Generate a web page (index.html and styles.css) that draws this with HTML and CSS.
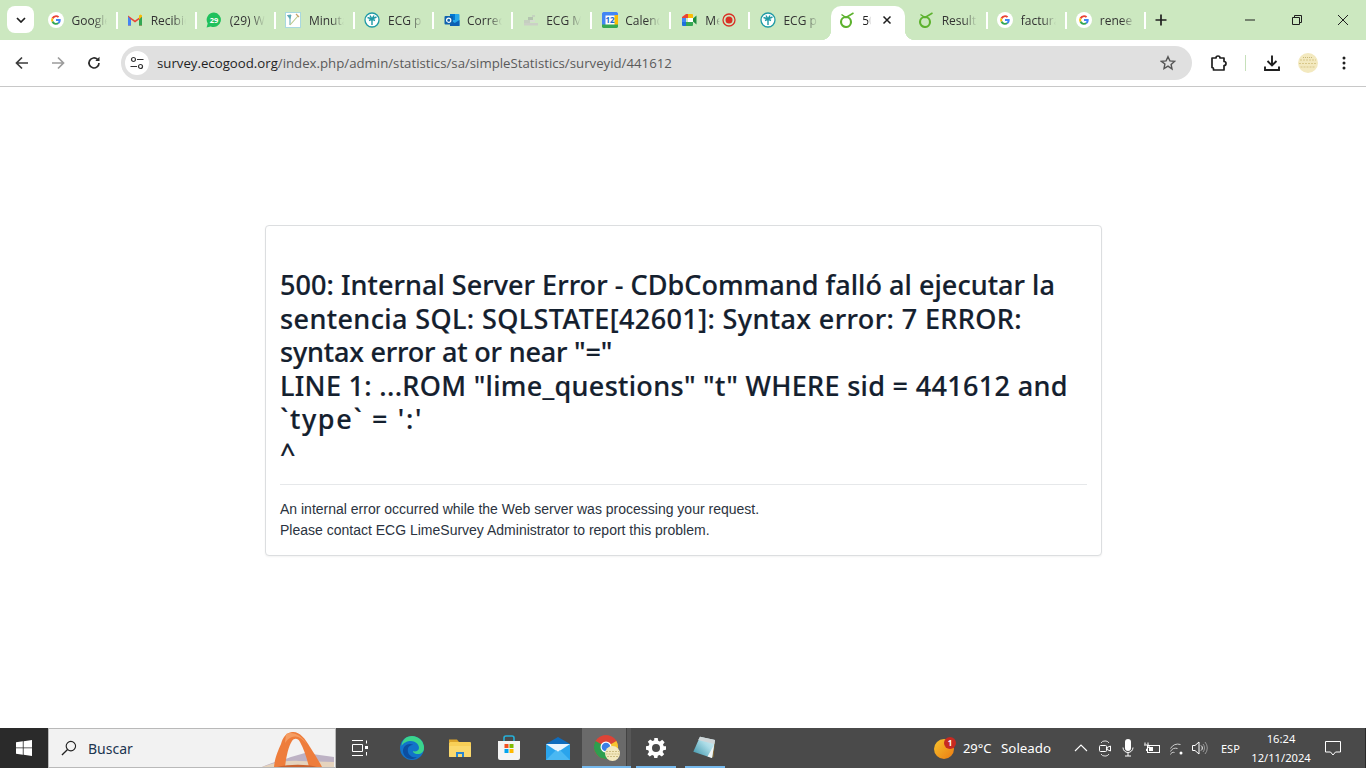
FILE: index.html
```html
<!DOCTYPE html>
<html lang="es">
<head>
<meta charset="utf-8">
<title>500: Internal Server Error</title>
<link rel="stylesheet" href="styles.css">
</head>
<body>
<svg class="defs" width="0" height="0" aria-hidden="true">
  <symbol id="g" viewBox="0 0 16 16">
    <circle cx="8" cy="8" r="8" fill="#fff"/>
    <path d="M8 3.200a4.800 4.800 0 0 1 3.200 1.200L9.900 5.700A2.900 2.900 0 0 0 5.300 7L3.700 5.800A4.800 4.800 0 0 1 8 3.200z" fill="#ea4335"/>
    <path d="M3.700 5.800 5.300 7a3 3 0 0 0 0 2L3.700 10.200a4.800 4.800 0 0 1 0-4.400z" fill="#fbbc05"/>
    <path d="M3.700 10.200 5.300 9a2.900 2.900 0 0 0 4.300 1.500l1.500 1.200A4.800 4.800 0 0 1 3.700 10.200z" fill="#34a853"/>
    <path d="M12.700 8c0-.3 0-.6-.1-.9H8v1.900h2.600a2.300 2.300 0 0 1-1 1.500l1.500 1.200c.9-.8 1.600-2.100 1.600-3.700z" fill="#4285f4"/>
  </symbol>
  <symbol id="palm" viewBox="0 0 16 16">
    <circle cx="8" cy="8" r="7" fill="#fff" stroke="#1f9aa5" stroke-width="1.300"/>
    <path d="M8 13V7M3.500 5.500 8 7l4.500-2M5 8.500 8 7l3 1.500M6 3.500 8 7l2-3.500" fill="none" stroke="#1f9aa5" stroke-width="1.400"/>
  </symbol>
  <symbol id="lime" viewBox="0 0 16 16">
    <circle cx="7" cy="10" r="5" fill="none" stroke="#5db22e" stroke-width="2.100"/>
    <path d="M2.500 2.500 7 5.500 14.500 1" fill="none" stroke="#5db22e" stroke-width="1.500"/>
  </symbol>
</svg>

<header class="tabstrip">
  <button class="tab-menu" aria-label="Buscar pestañas">
    <svg width="10" height="6" viewBox="0 0 10 6"><path d="M1 1l4 4 4-4" fill="none" stroke="#1f1f1f" stroke-width="1.700"/></svg>
  </button>
  <div class="tabs">
    <div class="tab"><svg class="fav"><use href="#g"/></svg><span class="tab-title">Google</span></div>
    <div class="tab"><svg class="fav" viewBox="0 0 16 16"><path d="M1 13.500V3.500l7 5 7-5v10h-3V7.500L8 10.500 4 7.500v6z" fill="#ea4335"/><path d="M1 13.500h3V7.500L1 4.500z" fill="#4285f4"/><path d="M12 13.500h3v-9l-3 3z" fill="#34a853"/><path d="M12 7.500l3-3v-1l-1.500-1L12 3.500z" fill="#fbbc05"/></svg><span class="tab-title">Recibidos</span></div>
    <div class="tab"><svg class="fav" viewBox="0 0 16 16"><path d="M8 .5a7.300 7.300 0 0 0-6.300 11L.6 15.500l4.100-1A7.300 7.300 0 1 0 8 .5z" fill="#1fc15c"/><text x="8" y="10.800" class="wa-num">29</text></svg><span class="tab-title">(29) WhatsApp</span></div>
    <div class="tab"><svg class="fav" viewBox="0 0 16 16"><rect x=".5" y=".5" width="15" height="15" fill="#fff" stroke="#a9d8e0"/><path d="M2.500 3.500 6 3 5 6.500zM5 5.500V13" fill="#5aa7b5" stroke="#5aa7b5"/><path d="M13 4 5 13" fill="none" stroke="#b9c98a" stroke-width="1.100"/><path d="M11 2l3 3" stroke="#c9a06a" stroke-width="1.200"/></svg><span class="tab-title">Minutas</span></div>
    <div class="tab"><svg class="fav"><use href="#palm"/></svg><span class="tab-title">ECG p</span></div>
    <div class="tab"><svg class="fav" viewBox="0 0 16 16"><rect x="6" y="2" width="9.500" height="12" rx="1" fill="#28a8ea"/><rect x="6" y="2" width="5" height="6" fill="#0078d4"/><path d="M6 8l4.800 3L15.500 8v6H6z" fill="#0a5fb4"/><rect x=".5" y="4" width="8.500" height="8.500" rx="1" fill="#0f62ae"/><circle cx="4.700" cy="8.200" r="2.100" fill="none" stroke="#fff" stroke-width="1.200"/></svg><span class="tab-title">Correo</span></div>
    <div class="tab"><svg class="fav" viewBox="0 0 16 16"><rect x="1" y="8" width="6" height="3" fill="#c5cfc0"/><rect x="5" y="5" width="5" height="3" fill="#b4c4b0"/><rect x="9" y="3" width="3" height="2" fill="#c5d3c0"/><rect x="1" y="11" width="14" height="2.500" fill="#cbd0c6"/><rect x="7" y="8" width="5" height="2" fill="#d5dcd0"/></svg><span class="tab-title">ECG Minutes</span></div>
    <div class="tab"><svg class="fav" viewBox="0 0 16 16"><rect x="0" y="0" width="16" height="16" rx="1.500" fill="#fff"/><path d="M0 1.500A1.500 1.500 0 0 1 1.500 0h13A1.500 1.500 0 0 1 16 1.500V3.500H0z" fill="#4285f4"/><rect y="3" width="3.500" height="10" fill="#4285f4"/><rect x="12.500" y="3" width="3.500" height="10" fill="#fbbc05"/><path d="M0 12.500h16v2A1.500 1.500 0 0 1 14.500 16h-13A1.500 1.500 0 0 1 0 14.500z" fill="#34a853"/><text x="8" y="11" class="cal-num">12</text></svg><span class="tab-title">Calendar</span></div>
    <div class="tab tab-rec"><svg class="fav" viewBox="0 0 16 16"><path d="M5 2h6v4H1V5z" fill="#ea4335"/><path d="M11 2a1 1 0 0 1 1 1v3H7V2z" fill="#fbbc05"/><path d="M1 6h4v4H1z" fill="#4285f4"/><path d="M1 10h4v4H2a1 1 0 0 1-1-1z" fill="#1e6fdc"/><path d="M5 10h7v3a1 1 0 0 1-1 1H5z" fill="#34a853"/><path d="M12 6v4H7V6z" fill="#fff"/><path d="M12 6.500 15.500 3.500v9L12 9.500z" fill="#1e8e3e"/></svg><span class="tab-title tab-title-short">Meet</span><svg class="rec" width="14" height="14" viewBox="0 0 14 14"><circle cx="7" cy="7" r="6" fill="none" stroke="#d93025" stroke-width="1.300"/><circle cx="7" cy="7" r="3.500" fill="#d93025"/></svg></div>
    <div class="tab"><svg class="fav"><use href="#palm"/></svg><span class="tab-title">ECG p</span></div>
    <div class="tab tab-active"><svg class="fav"><use href="#lime"/></svg><span class="tab-title tab-title-tiny">500</span><svg class="tab-x" width="10" height="10" viewBox="0 0 10 10"><path d="M1.500 1.500l7 7M8.500 1.500l-7 7" stroke="#1f1f1f" stroke-width="1.500"/></svg></div>
    <div class="tab"><svg class="fav"><use href="#lime"/></svg><span class="tab-title">Resultados</span></div>
    <div class="tab"><svg class="fav"><use href="#g"/></svg><span class="tab-title">facturas</span></div>
    <div class="tab"><svg class="fav"><use href="#g"/></svg><span class="tab-title">renee</span></div>
  </div>
  <button class="new-tab" aria-label="Nueva pestaña">
    <svg width="12" height="12" viewBox="0 0 12 12"><path d="M6 .5v11M.5 6h11" stroke="#1f1f1f" stroke-width="1.700"/></svg>
  </button>
  <div class="window-controls">
    <svg width="12" height="12" viewBox="0 0 12 12"><path d="M1 6h10" stroke="#1f1f1f"/></svg>
    <svg width="12" height="12" viewBox="0 0 12 12"><path d="M1.500 3.500h7v7h-7zM3.500 3.500v-2h7v7h-2" fill="none" stroke="#1f1f1f"/></svg>
    <svg width="12" height="12" viewBox="0 0 12 12"><path d="M1 1l10 10M11 1 1 11" stroke="#1f1f1f"/></svg>
  </div>
</header>

<nav class="toolbar">
  <div class="nav-btns">
    <svg width="16" height="16" viewBox="0 0 16 16"><path d="M14 8H2.500M8 2.500 2.500 8 8 13.500" fill="none" stroke="#3b3b3b" stroke-width="1.700"/></svg>
    <svg width="16" height="16" viewBox="0 0 16 16"><path d="M2 8h11.500M8 2.500 13.500 8 8 13.500" fill="none" stroke="#9c9c9c" stroke-width="1.700"/></svg>
    <svg width="16" height="16" viewBox="0 0 16 16"><path d="M13 8a5 5 0 1 1-1.500-3.600" fill="none" stroke="#2b2b2b" stroke-width="1.700"/><path d="M13.500 1.800v4.200H9.300z" fill="#2b2b2b"/></svg>
  </div>
  <div class="omnibox">
    <span class="site-info">
      <svg width="14" height="14" viewBox="0 0 14 14"><circle cx="3.500" cy="3.500" r="2" fill="none" stroke="#333" stroke-width="1.200"/><path d="M7 3.500h6.500M.5 10.500H7" stroke="#333" stroke-width="1.200"/><circle cx="10.500" cy="10.500" r="2" fill="none" stroke="#333" stroke-width="1.200"/></svg>
    </span>
    <span class="url"><span class="host">survey.ecogood.org</span>/index.php/admin/statistics/sa/simpleStatistics/surveyid/441612</span>
    <svg class="star" width="16" height="16" viewBox="0 0 16 16"><path d="M8 1.700l1.900 4.200 4.600.5-3.400 3.100.9 4.500L8 11.200l-4 2.300.9-4.500L1.500 6.400l4.600-.5z" fill="none" stroke="#555" stroke-width="1.400"/></svg>
  </div>
  <div class="tool-btns">
    <svg class="t-ext" width="18" height="18" viewBox="0 0 18 18"><path d="M2 4h4a2 2 0 1 1 4 0h4v3.500a2 2 0 1 1 0 4V16H3.500v-1a1.500 1.500 0 0 0-1.500-1.500z" fill="none" stroke="#1f1f1f" stroke-width="1.700" stroke-linejoin="round"/></svg>
    <span class="t-sep"></span>
    <svg class="t-dl" width="16" height="18" viewBox="0 0 16 18"><path d="M8 1.500V11M3.500 7 8 11.500 12.500 7" fill="none" stroke="#1f1f1f" stroke-width="1.900"/><path d="M1 12.500v3.500h14v-3.500" fill="none" stroke="#1f1f1f" stroke-width="1.900"/></svg>
    <svg class="t-avatar" width="20" height="20" viewBox="0 0 20 20"><circle cx="10" cy="10" r="10" fill="#f3e9bf"/><path d="M2 7h16M1 10.500h18M2.500 14h15" stroke="#d8c88a" stroke-width="1.200" stroke-dasharray="2 1"/><path d="M5 4.500h10" stroke="#c9b878" stroke-dasharray="1 1"/></svg>
    <svg class="t-menu" width="4" height="14" viewBox="0 0 4 14"><circle cx="2" cy="2" r="1.500" fill="#1f1f1f"/><circle cx="2" cy="7" r="1.500" fill="#1f1f1f"/><circle cx="2" cy="12" r="1.500" fill="#1f1f1f"/></svg>
  </div>
</nav>

<main class="page">
  <section class="card">
    <h1 class="err-title"><span class="ln ln-1">500: Internal Server Error - CDbCommand falló al ejecutar la</span><span class="ln ln-2">sentencia SQL: SQLSTATE[42601]: Syntax error: 7 ERROR:</span><span class="ln ln-3">syntax error at or near "="</span><span class="ln ln-4">LINE 1: ...ROM "lime_questions" "t" WHERE sid = 441612 and</span><span class="ln ln-5">`type` = ':'</span><span class="ln ln-6">^</span></h1>
    <hr class="rule">
    <p class="err-text">An internal error occurred while the Web server was processing your request.<br>Please contact ECG LimeSurvey Administrator to report this problem.</p>
  </section>
</main>

<footer class="taskbar">
  <div class="start">
    <svg width="16" height="16" viewBox="0 0 16 16"><path d="M0 2.300 6.800 1.300V7.500H0zM7.600 1.200 16 0v7.500H7.600zM0 8.300h6.800v6.400L0 13.700zM7.600 8.300H16V16l-8.400-1.200z" fill="#fff"/></svg>
  </div>
  <div class="search">
    <svg width="16" height="16" viewBox="0 0 17 17"><circle cx="10.500" cy="6.500" r="5" fill="none" stroke="#222" stroke-width="1.200"/><path d="M7 10 1 16" stroke="#222" stroke-width="1.400"/></svg>
    <span class="search-label">Buscar</span>
    <svg class="arch" width="80" height="38" viewBox="0 0 80 38"><path d="M7 38C20 32 32 30 36 28L50 24 79 28V38z" fill="#bdb2c4"/><path d="M7 38C20 33 34 31 44 32L79 33V38z" fill="#e5d3bd"/><path d="M19 38C20 28 23 22 26 15 28 8 31 4 37 3 44 2 50 9 55 18 60 26 64 32 67 38H54C52 30 49 20 45 13 43 9 39 9 37 12 33 18 31 30 30 38z" fill="#ee7d3c"/><path d="M31 5C38 2 46 6 52 15 47 9 42 6 37 8 34 9 32 11 30 14z" fill="#f59d63"/><path d="M22 38c12-3 30-3 40 0z" fill="#c9622f"/></svg>
  </div>
  <div class="apps">
    <div class="app app-task"><svg width="16" height="16" viewBox="0 0 16 16"><path d="M0 .5h11M0 15.500h11M.5 4.500h10v7H.5z" fill="none" stroke="#fff"/><path d="M14.500 .5v3M14.500 12v3.500" stroke="#fff"/><rect x="13" y="6" width="3" height="3" fill="#fff"/></svg></div>
    <div class="app app-edge"><svg width="24" height="24" viewBox="0 0 24 24"><circle cx="12" cy="12" r="12" fill="#1273c9"/><path d="M12 0a12 12 0 0 1 12 12c0 4-3 6-6 6-4 0-5-2-5-3 2 1 6 0 6-3 0-4-4-7-8-7S3 7 1.500 10C2 4 6 0 12 0z" fill="#3bd58c"/><path d="M3 15c0-4 3-7 7-7 2 0 3 1 3 1-3 0-6 2-5 7 1 4 5 6 9 5-6 5-14 0-14-6z" fill="#0c4ea0"/></svg></div>
    <div class="app"><svg width="22" height="20" viewBox="0 0 22 20"><path d="M0 1.500h8l2 2.500H0z" fill="#dba42a"/><rect y="4" width="22" height="15" rx="1" fill="#f8cf57"/><rect x="0" y="8" width="22" height="11" rx="1" fill="#fbd96d"/><path d="M7 19v-5h8v5h-2v-3H9v3z" fill="#2a86d1"/></svg></div>
    <div class="app"><svg width="24" height="26" viewBox="0 0 24 26"><path d="M7 6V3a2 2 0 0 1 2-2h6a2 2 0 0 1 2 2v3" fill="none" stroke="#26b0d8" stroke-width="1.600"/><path d="M1 6h22v17a2 2 0 0 1-2 2H3a2 2 0 0 1-2-2z" fill="#f4f4f4"/><rect x="7.500" y="9" width="4" height="4" fill="#f25022"/><rect x="12.500" y="9" width="4" height="4" fill="#7fba00"/><rect x="7.500" y="14" width="4" height="4" fill="#00a4ef"/><rect x="12.500" y="14" width="4" height="4" fill="#ffb900"/></svg></div>
    <div class="app"><svg width="24" height="23" viewBox="0 0 24 23"><path d="M0 7 12 0l12 7v3H0z" fill="#0f6cbd"/><rect y="7" width="24" height="16" fill="#2aa4ec"/><path d="M0 7l12 8 12-8" fill="#eaf5fd"/><path d="M0 23 10 13l2 2 2-2 10 10z" fill="#4ab8f2"/></svg></div>
    <div class="app app-open app-chrome"><svg width="27" height="26" viewBox="0 0 27 26"><circle cx="12" cy="12" r="12" fill="#dc4437"/><path d="M12 12 22.400 6A12 12 0 0 1 14 23.800z" fill="#f7c630"/><path d="M12 12 14 23.800A12 12 0 0 1 1.600 6z" fill="#2e9e4f"/><circle cx="12" cy="12" r="5.500" fill="#fff"/><circle cx="12" cy="12" r="4.300" fill="#3c7fe6"/><circle cx="18.500" cy="18.500" r="7.500" fill="#f3e9bf"/><path d="M12 16.500h13M11.500 19h14M13 21.500h11" stroke="#cdbd82" stroke-dasharray="2 1"/></svg></div>
    <div class="app app-open"><svg width="20" height="20" viewBox="0 0 20 20"><path d="M8.300 0h3.400l.5 2.700 1.700.7 2.300-1.600 2.400 2.400-1.600 2.300.7 1.700L20 8.300v3.400l-2.700.5-.7 1.700 1.600 2.300-2.400 2.400-2.300-1.600-1.700.7-.5 2.700H8.300l-.5-2.700-1.700-.7-2.300 1.600-2.400-2.400 1.600-2.300-.7-1.700L0 11.700V8.300l2.700-.5.7-1.700L1.800 3.800l2.400-2.400 2.300 1.600 1.700-.7zM10 6a4 4 0 1 0 0 8 4 4 0 0 0 0-8z" fill="#fff" fill-rule="evenodd"/></svg></div>
    <div class="app app-open"><svg width="24" height="24" viewBox="0 0 24 24"><defs><linearGradient id="note" x1="0" y1="1" x2="1" y2="0"><stop offset="0" stop-color="#2f8ba3"/><stop offset=".6" stop-color="#a9dbe6"/><stop offset="1" stop-color="#dff1f4"/></linearGradient></defs><path d="M22 4 20.500 21 18 22z" fill="#8f6f35"/><path d="M7 .7 22 4 19 22 .3 15.700z" fill="url(#note)"/><path d="M7 .7 22 4 21.300 8 5.200 4z" fill="#cfd6d8"/><path d="M21 9 19 22 14.500 20.500z" fill="#f2f5f5"/></svg></div>
  </div>
  <div class="tray">
    <svg class="sun" width="24" height="24" viewBox="0 0 24 24"><defs><linearGradient id="sun" x1="0" y1="0" x2="1" y2="1"><stop offset="0" stop-color="#f7c42c"/><stop offset="1" stop-color="#ec7a12"/></linearGradient></defs><circle cx="11" cy="13" r="10" fill="url(#sun)"/><circle cx="17" cy="7" r="6" fill="#c62a22"/><text x="17" y="10" class="badge-num">1</text></svg>
    <span class="temp">29°C</span>
    <span class="cond">Soleado</span>
    <svg class="t-up" width="14" height="8" viewBox="0 0 14 8"><path d="M1 7l6-6 6 6" fill="none" stroke="#fff" stroke-width="1.100"/></svg>
    <svg class="t-cam" width="12" height="17" viewBox="0 0 12 17"><path d="M2 3a4 4 0 0 1 4-2h1a4 4 0 0 1 3 2M2 14a4 4 0 0 0 4 2h1a4 4 0 0 0 3-2" fill="none" stroke="#ddd"/><rect x=".5" y="5.500" width="7" height="6" rx="1" fill="none" stroke="#fff"/><path d="M8 7.500 11.500 6v5L8 9.500z" fill="none" stroke="#fff"/></svg>
    <svg class="t-mic" width="12" height="18" viewBox="0 0 12 18"><rect x="3" y="0" width="6" height="12" rx="3" fill="#fff"/><path d="M1 8.500a5 5 0 0 0 10 0M6 13.500V17M3 17h6" fill="none" stroke="#fff"/></svg>
    <svg class="t-bat" width="16" height="12" viewBox="0 0 16 12"><rect x="3.500" y="3.500" width="12" height="7" fill="none" stroke="#fff"/><rect x="5" y="5" width="4" height="4" fill="#fff"/><path d="M1 .5v2M4 .5v2M0 3h5v2L2.500 7v2" fill="none" stroke="#fff"/></svg>
    <svg class="t-wifi" width="14" height="13" viewBox="0 0 14 13"><path d="M.5 6.500a9 9 0 0 1 10-4M.5 9.500a6 6 0 0 1 7-3M.5 12.500a3 3 0 0 1 4-2" fill="none" stroke="#ccc"/><circle cx="11" cy="11" r="1.500" fill="#fff"/></svg>
    <svg class="t-vol" width="16" height="14" viewBox="0 0 16 14"><path d="M.5 4.500h2.500L7 1v12L3 9.500H.5z" fill="none" stroke="#fff"/><path d="M9 4.500a3 3 0 0 1 0 5" fill="none" stroke="#fff"/><path d="M11 3a6 6 0 0 1 0 8M13 1a9 9 0 0 1 0 12" fill="none" stroke="#999"/></svg>
    <span class="lang">ESP</span>
    <span class="clock"><span>16:24</span><span>12/11/2024</span></span>
    <svg class="t-note" width="16" height="15" viewBox="0 0 16 15"><path d="M.5.500h15v10.500h-5l-2.500 3-2.500-3h-5z" fill="none" stroke="#fff"/></svg>
  </div>
</footer>
</body>
</html>
```
FILE: styles.css
```css
* { box-sizing: border-box; }
html, body { margin: 0; padding: 0; }
body {
  width: 1366px;
  height: 768px;
  overflow: hidden;
  display: flex;
  flex-direction: column;
  background: #fff;
  font-family: "Open Sans", "Noto Sans", sans-serif;
}
.defs { position: absolute; }
button { border: 0; padding: 0; background: none; }

/* tab strip */
.tabstrip {
  height: 40px;
  flex: none;
  display: flex;
  align-items: flex-start;
  background: #cce8c0;
}
.tab-menu {
  width: 27px;
  height: 27px;
  margin: 6px 0 0 7px;
  flex: none;
  display: flex;
  align-items: center;
  justify-content: center;
  background: #fff;
  border-radius: 8px;
}
.tabs {
  display: flex;
  margin-left: 3.600px;
  flex: none;
}
.tab {
  width: 79.100px;
  height: 34px;
  margin-top: 6px;
  padding-left: 10.500px;
  padding-bottom: 6px;
  flex: none;
  display: flex;
  align-items: center;
  position: relative;
}
.tab::after {
  content: "";
  position: absolute;
  right: -1px;
  top: 6px;
  width: 2px;
  height: 17px;
  background: #fff;
}
.tab:nth-child(10)::after { display: none; }
.fav { width: 16px; height: 16px; flex: none; }
.tab-title {
  margin-left: 7.500px;
  width: 35px;
  flex: none;
  overflow: hidden;
  white-space: nowrap;
  font-size: 12px;
  color: #333;
  -webkit-mask-image: linear-gradient(to right, #000 62%, transparent 100%);
  mask-image: linear-gradient(to right, #000 62%, transparent 100%);
}
.tab-title-short { width: 15px; }
.tab-title-tiny { width: 9px; color: #222; }
.rec { margin-left: 2px; flex: none; }
.tab-rec .fav { margin-right: 1px; }
.tab-active {
  background: #fff;
  border-radius: 10px 10px 0 0;
  width: 74px;
  margin-left: 2.600px;
  margin-right: 2.500px;
  padding-left: 8px;
}
.tab-active::before,
.tab-active::after {
  content: "";
  position: absolute;
  top: auto;
  bottom: 0;
  width: 10px;
  height: 10px;
}
.tab-active::before {
  left: -10px;
  background: radial-gradient(circle at 0 0, transparent 10px, #fff 10.500px);
}
.tab-active::after {
  right: -10px;
  background: radial-gradient(circle at 100% 0, transparent 10px, #fff 10.500px);
}
.tab-active .tab-x { margin-left: 11px; flex: none; }
.tab-active .tab-title { margin-left: 7px; }
.new-tab {
  width: 12px;
  height: 12px;
  margin: 14px 0 0 10.500px;
  flex: none;
  display: flex;
}
.window-controls {
  margin-left: auto;
  display: flex;
  gap: 34.500px;
  padding: 14px 17px 0 0;
}

/* toolbar */
.toolbar {
  height: 47px;
  flex: none;
  display: flex;
  align-items: center;
  background: #fff;
  border-bottom: 1px solid #c8c8c8;
  border-radius: 10px 10px 0 0;
}
.nav-btns {
  display: flex;
  gap: 20px;
  width: 121px;
  padding-left: 14px;
  flex: none;
}
.omnibox {
  width: 1071px;
  height: 34px;
  flex: none;
  display: flex;
  align-items: center;
  background: #e0e0e0;
  border-radius: 17px;
  padding: 0 16px 0 4px;
}
.site-info {
  width: 24px;
  height: 24px;
  flex: none;
  display: flex;
  align-items: center;
  justify-content: center;
  background: #fff;
  border-radius: 50%;
}
.url {
  margin-left: 8px;
  font-size: 13.230px;
  color: #5a5a5a;
  white-space: nowrap;
}
.host { color: #1f1f1f; }
.star { margin-left: auto; flex: none; }
.tool-btns {
  display: flex;
  align-items: center;
  flex: none;
}
.t-ext { margin-left: 18px; }
.t-sep { width: 1px; height: 16px; margin-left: 17px; background: #c6e0ba; }
.t-dl { margin-left: 18px; }
.t-avatar { margin-left: 18px; }
.t-menu { margin-left: 24px; }

/* page */
.page {
  flex: 1;
  min-height: 0;
  padding-top: 138px;
}
.card {
  width: 837px;
  height: 331px;
  margin-left: 265px;
  padding: 42px 14px 0;
  background: #fff;
  border: 1px solid #dcdee0;
  border-radius: 4px;
  box-shadow: 0 1px 2px rgba(0, 0, 0, .05);
}
.err-title {
  margin: 0;
  font-family: "Noto Sans", "Open Sans", sans-serif;
  font-size: 27px;
  line-height: 33.600px;
  font-weight: 500;
  color: #14202e;
  -webkit-text-stroke: .2px #14202e;
}
.ln { display: block; white-space: nowrap; }
.ln-1 { letter-spacing: .05px; }
.ln-2 { letter-spacing: .39px; }
.ln-3 { letter-spacing: -.19px; }
.ln-4 { letter-spacing: .32px; }
.ln-5 { letter-spacing: 1.670px; }
.rule {
  margin: 14.500px 0 14px;
  border: 0;
  border-top: 1px solid #e6e8ea;
}
.err-text {
  margin: 0;
  font-family: "Liberation Sans", Arial, sans-serif;
  font-size: 14px;
  line-height: 21px;
  color: #2b3340;
}

/* taskbar */
.taskbar {
  height: 40px;
  flex: none;
  display: flex;
  align-items: center;
  background: #4a4a4a;
  color: #fff;
}
.start {
  width: 48px;
  height: 40px;
  flex: none;
  display: flex;
  align-items: center;
  justify-content: center;
  background: #2a2a2a;
}
.search {
  width: 288px;
  height: 40px;
  flex: none;
  display: flex;
  align-items: center;
  padding-left: 12px;
  background: #f2f2f2;
  border: 1px solid #b9b9b9;
  overflow: hidden;
}
.search-label {
  margin-left: 11px;
  font-family: "Noto Sans", sans-serif;
  font-size: 14px;
  color: #1c3550;
}
.arch { margin-left: auto; flex: none; align-self: flex-end; }
.apps {
  display: flex;
  margin-left: 1px;
  flex: none;
}
.app {
  width: 49px;
  height: 40px;
  flex: none;
  display: flex;
  align-items: center;
  justify-content: center;
  position: relative;
}
.app-task { padding-right: 3px; }
.app-edge { padding-left: 2px; }
.app-open::after {
  content: "";
  position: absolute;
  left: 4.500px;
  right: 4.500px;
  bottom: 0;
  height: 2px;
  background: #76b9ed;
}
.app-chrome {
  padding-left: 2px;
  background: linear-gradient(to right, #6a6a6a 44.500px, #434343 44.500px, #434343 45.500px, #575757 45.500px);
}
.app-chrome::after { left: 0; right: 0; }
.tray {
  margin-left: auto;
  height: 40px;
  display: flex;
  align-items: center;
  flex: none;
  border-right: 1px solid #2a2a2a;
  font-family: "Noto Sans", sans-serif;
}
.sun { flex: none; }
.temp { margin-left: 6px; font-size: 13px; }
.cond { margin-left: 9.500px; font-size: 13.300px; }
.t-up { margin-left: 23px; }
.t-cam { margin-left: 11px; }
.t-mic { margin-left: 11px; }
.t-bat { margin-left: 10px; }
.t-wifi { margin-left: 10px; }
.t-vol { margin-left: 8px; }
.lang { margin-left: 13px; font-size: 11px; width: 19px; }
.clock {
  margin-left: 12px;
  width: 58px;
  display: flex;
  flex-direction: column;
  align-items: center;
  font-size: 11.200px;
  line-height: 19px;
}
.t-note { margin: 0 24px 0 15px; }

/* svg text */
.wa-num { font: 700 7.500px "Noto Sans", sans-serif; fill: #fff; text-anchor: middle; }
.cal-num { font: 700 8px "Noto Sans", sans-serif; fill: #1a66d0; text-anchor: middle; }
.badge-num { font: 700 8px "Noto Sans", sans-serif; fill: #fff; text-anchor: middle; }
```
